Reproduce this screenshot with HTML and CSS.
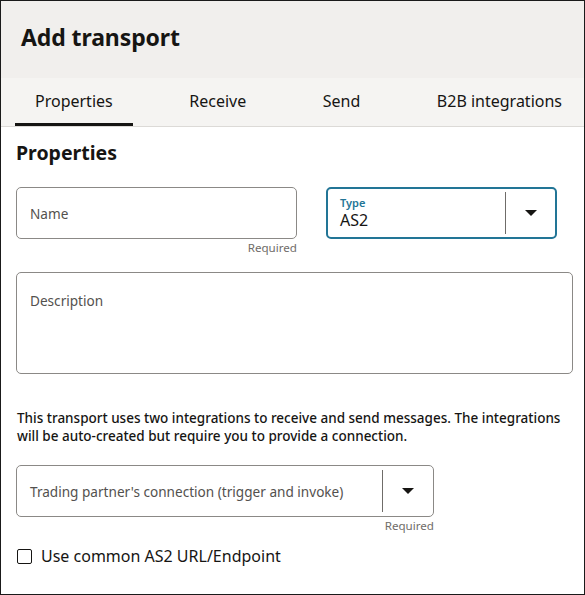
FILE: index.html
```html
<!DOCTYPE html>
<html>
<head>
<meta charset="utf-8">
<link rel="stylesheet" href="styles.css">
</head>
<body>
<div class="dialog">
  <header class="header"><h1 class="title">Add transport</h1></header>
  <nav class="tabs">
    <div class="tab active">Properties</div>
    <div class="tab">Receive</div>
    <div class="tab">Send</div>
    <div class="tab">B2B integrations</div>
  </nav>
  <main class="content">
    <h2 class="section-title">Properties</h2>
    <div class="row-two">
      <div class="field-wrap">
        <div class="field"><span class="placeholder">Name</span></div>
        <div class="help">Required</div>
      </div>
      <div class="field-wrap">
        <div class="field select focused">
          <div class="select-value stacked">
            <span class="float-label">Type</span>
            <span class="value">AS2</span>
          </div>
          <div class="select-btn"><span class="caret"></span></div>
        </div>
      </div>
    </div>
    <div class="field textarea"><span class="placeholder">Description</span></div>
    <p class="note">This transport uses two integrations to receive and send messages. The integrations will be auto-created but require you to provide a connection.</p>
    <div class="field-wrap conn">
      <div class="field select">
        <div class="select-value"><span class="placeholder">Trading partner's connection (trigger and invoke)</span></div>
        <div class="select-btn"><span class="caret"></span></div>
      </div>
      <div class="help">Required</div>
    </div>
    <label class="check"><span class="box"></span><span>Use common AS2 URL/Endpoint</span></label>
  </main>
</div>
</body>
</html>
```
FILE: styles.css
```css
* { box-sizing: border-box; }
html, body { margin: 0; padding: 0; }
body {
  font-family: "Noto Sans", "Open Sans", sans-serif;
  color: #161513;
  background: #fff;
}
.dialog {
  width: 585px;
  height: 595px;
  border: 1px solid #1a1a1a;
  display: flex;
  flex-direction: column;
  overflow: hidden;
}
.header {
  background: #f1efed;
  height: 77px;
  padding: 0 20px 6px;
  display: flex;
  align-items: center;
}
.title {
  margin: 0;
  font-size: 23px;
  font-weight: 700;
  letter-spacing: -0.1px;
}
.tabs {
  background: #f5f4f2;
  height: 49px;
  border-bottom: 1px solid #dcdad7;
  display: flex;
  justify-content: space-between;
  padding: 0 2px 0 14px;
}
.tab {
  padding: 0 20px;
  display: flex;
  align-items: center;
  font-size: 16px;
  color: #161513;
  border-bottom: 3px solid transparent;
  padding-top: 1px;
}
.tab.active { border-bottom-color: #161513; }
.content {
  padding: 14px 11px 0 15px;
  display: flex;
  flex-direction: column;
}
.section-title {
  margin: 0 0 22px;
  font-size: 19.5px;
  font-weight: 700;
  line-height: 24px;
}
.row-two {
  display: grid;
  grid-template-columns: 281px 231px;
  column-gap: 29px;
}
.field-wrap { display: flex; flex-direction: column; }
.field {
  height: 52px;
  border: 1px solid #8b8986;
  border-radius: 5px;
  display: flex;
  align-items: center;
  padding: 0 13px;
}
.placeholder {
  font-size: 13.6px;
  color: #53514e;
}
.help {
  text-align: right;
  font-size: 11.6px;
  color: #6f6c69;
  margin-top: 1px;
  line-height: 16px;
}
.select { padding-right: 0; }
.select-value {
  flex: 1;
  display: flex;
  flex-direction: column;
  justify-content: center;
}
.select-value.stacked {
  gap: 3px;
  padding-bottom: 2px;
}
.select-btn {
  width: 51px;
  align-self: stretch;
  margin: 4px 0;
  border-left: 1px solid #6f6c69;
  display: flex;
  align-items: center;
  justify-content: center;
}
.caret {
  width: 0; height: 0;
  border-left: 6px solid transparent;
  border-right: 6px solid transparent;
  border-top: 6px solid #161513;
}
.focused {
  border: 2px solid #227596;
  padding-left: 12px;
}
.focused .select-btn { margin: 3px 0; width: 50px; }
.float-label {
  font-size: 11px;
  font-weight: 600;
  color: #227596;
  line-height: 13px;
}
.value {
  font-size: 16px;
  line-height: 17px;
}
.textarea {
  margin-top: 16px;
  height: 102px;
  align-items: flex-start;
  padding-top: 18px;
}
.note {
  margin: 35px 0 0 1px;
  font-size: 13.5px;
  line-height: 18px;
  font-weight: 500;
}
.conn {
  width: 418px;
  margin-top: 20px;
}
.check {
  display: flex;
  align-items: center;
  gap: 9px;
  font-size: 16px;
  margin-top: 11px;
  margin-left: 1px;
}
.box {
  width: 15px; height: 15px;
  border: 1.5px solid #161513;
  border-radius: 2px;
}
```
